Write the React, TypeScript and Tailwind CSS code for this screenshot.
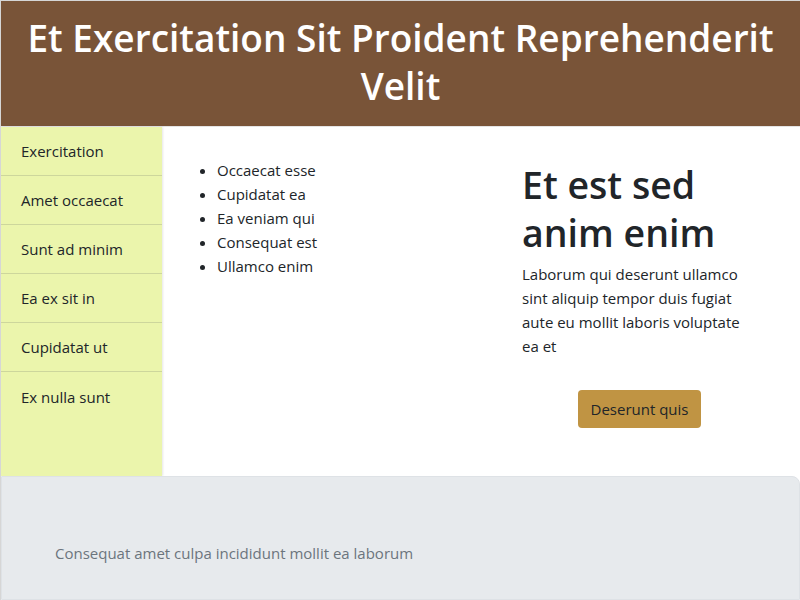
import React from "react";

export default function App() {
  const nav = ["Exercitation", "Amet occaecat", "Sunt ad minim", "Ea ex sit in", "Cupidatat ut", "Ex nulla sunt"];
  const items = ["Occaecat esse", "Cupidatat ea", "Ea veniam qui", "Consequat est", "Ullamco enim"];
  return (
    <div className="w-[800px] h-[600px] overflow-hidden bg-white border-l border-t border-[#d6d6d6] flex flex-col text-[#212529]" style={{ fontFamily: '"Open Sans", sans-serif' }}>
      <header className="h-[126px] shrink-0 bg-[#795438] border-b border-[#e4e4e4] flex items-center justify-center px-6 pb-[4px]">
        <h1 className="text-white text-[37px] leading-[48px] font-semibold text-center">Et Exercitation Sit Proident Reprehenderit Velit</h1>
      </header>
      <div className="flex h-[349px] shrink-0">
        <nav className="w-[161px] shrink-0 bg-[#ebf5ac] shadow-[1px_0_2px_rgba(0,0,0,0.1)] flex flex-col">
          {nav.map((n) => (
            <div key={n} className="h-[49px] px-5 pt-[1px] flex items-center border-b border-[#cdd69c] text-[15px] last:border-b-0">{n}</div>
          ))}
        </nav>
        <main className="flex-1 flex">
          <div className="w-[360px] pt-[31px] pl-[40px]">
            <ul className="list-disc pl-[15px] text-[15px] leading-[24px]">
              {items.map((i) => (
                <li key={i}>{i}</li>
              ))}
            </ul>
          </div>
          <div className="w-[235px] pt-[34px] flex flex-col">
            <h2 className="text-[37.5px] leading-[48px] font-semibold">Et est sed anim enim</h2>
            <p className="mt-[5px] text-[15px] leading-[24px]">Laborum qui deserunt ullamco sint aliquip tempor duis fugiat aute eu mollit laboris voluptate ea et</p>
            <div className="flex justify-center mt-[32px]">
              <button className="h-[38px] px-[13px] rounded bg-[#c09443] text-[15px] text-[#212529]">Deserunt quis</button>
            </div>
          </div>
        </main>
      </div>
      <footer className="flex-1 bg-[#e7eaed] border border-[#dee2e6] rounded-tr-lg pl-[53px] pt-[65px] text-[15px] text-[#6c757d]">
        Consequat amet culpa incididunt mollit ea laborum
      </footer>
    </div>
  );
}
